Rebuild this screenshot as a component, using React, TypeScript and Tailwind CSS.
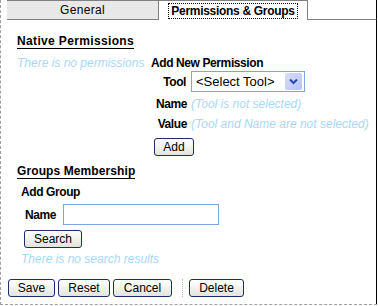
import React from 'react'

const font = { fontFamily: '"Liberation Sans", Arial, sans-serif' }

function Btn({ label, className = '' }: { label: string; className?: string }) {
  return (
    <button
      className={`block h-[18px] rounded-[3px] border border-[#1c2c6c] bg-gradient-to-b from-white to-[#e4e4dc] text-[12px] leading-none text-black ${className}`}
    >
      {label}
    </button>
  )
}

export default function App() {
  return (
    <div style={font} className="relative h-[306px] w-[378px] overflow-hidden bg-white text-[12px] leading-[14px] text-black">
      <div className="flex h-[305px] w-[377px] flex-col border-b border-l border-dashed border-[#a0a0a0]">
        {/* Tabs */}
        <div className="flex h-[20px] shrink-0 pl-[6px]">
          <div className="flex w-[151px] items-center justify-center border-b border-t border-[#808080] bg-[#e8e8e8] text-[12px] tracking-[0.3px]">
            General
          </div>
          <div className="flex w-[150px] items-center justify-center border-l border-r border-t border-[#808080] bg-white">
            <span className="border border-dotted border-black px-[2px] text-[12px] font-bold leading-[14px] tracking-[-0.3px]">
              Permissions &amp; Groups
            </span>
          </div>
          <div className="flex-1 border-b border-r border-[#808080] [border-right-color:#000]" />
        </div>

        <div className="flex flex-1 flex-col items-start border-r border-black pl-[16px]">
          {/* Native permissions */}
          <h2 className="mt-[15px] border-b border-black text-[12px] font-bold leading-[13px] tracking-[0.35px]">
            Native Permissions
          </h2>
          <div className="mt-[7px] flex">
            <div className="w-[134px] italic text-[#a8d8f8]">There is no permissions</div>
            <div>
              <div className="font-bold tracking-[-0.4px]">Add New Permission</div>
              <div className="mt-[1px] grid grid-cols-[36px_auto] items-center gap-x-[4px]">
                <span className="pr-[1px] text-right font-bold tracking-[-0.4px]">Tool</span>
                <div className="flex h-[21px] w-[114px] items-center justify-between border border-[#7ea6dc] pl-[4px] pr-[2px] text-[13px]">
                  <span>&lt;Select Tool&gt;</span>
                  <span className="flex h-[17px] w-[17px] items-center justify-center rounded-[2px] bg-gradient-to-br from-[#d8dcfc] to-[#b8c4f4]">
                    <svg width="9" height="7" viewBox="0 0 9 7">
                      <path d="M1 1.5 L4.5 5 L8 1.5" stroke="#2844b8" strokeWidth="2" fill="none" />
                    </svg>
                  </span>
                </div>
                <span className="mt-[5px] text-right font-bold tracking-[-0.4px]">Name</span>
                <span className="mt-[5px] italic text-[#a8d8f8]">(Tool is not selected)</span>
                <span className="mt-[6px] text-right font-bold tracking-[-0.4px]">Value</span>
                <span className="mt-[6px] italic text-[#a8d8f8]">(Tool and Name are not selected)</span>
              </div>
              <Btn label="Add" className="ml-[3px] mt-[7px] w-[40px]" />
            </div>
          </div>

          {/* Groups */}
          <h2 className="mt-[9px] border-b border-black text-[12px] font-bold leading-[13px] tracking-[0.1px]">
            Groups Membership
          </h2>
          <div className="ml-[4px] mt-[6px] font-bold tracking-[-0.4px]">Add Group</div>
          <div className="ml-[8px] mt-[5px] flex items-center gap-[7px]">
            <span className="font-bold tracking-[-0.4px]">Name</span>
            <div className="h-[21px] w-[156px] border border-[#7ea6dc]" />
          </div>
          <Btn label="Search" className="ml-[7px] mt-[5px] w-[58px]" />
          <div className="ml-[4px] mt-[4px] italic text-[#a8d8f8]">There is no search results</div>

          <div className="-ml-[9px] mt-[13px] flex items-center">
            <Btn label="Save" className="w-[47px]" />
            <Btn label="Reset" className="ml-[3px] w-[52px]" />
            <Btn label="Cancel" className="ml-[3px] w-[59px]" />
            <div className="ml-[10px] h-[18px] border-l border-dotted border-[#c0c0c0]" />
            <Btn label="Delete" className="ml-[6px] w-[55px]" />
          </div>
        </div>
      </div>
    </div>
  )
}
